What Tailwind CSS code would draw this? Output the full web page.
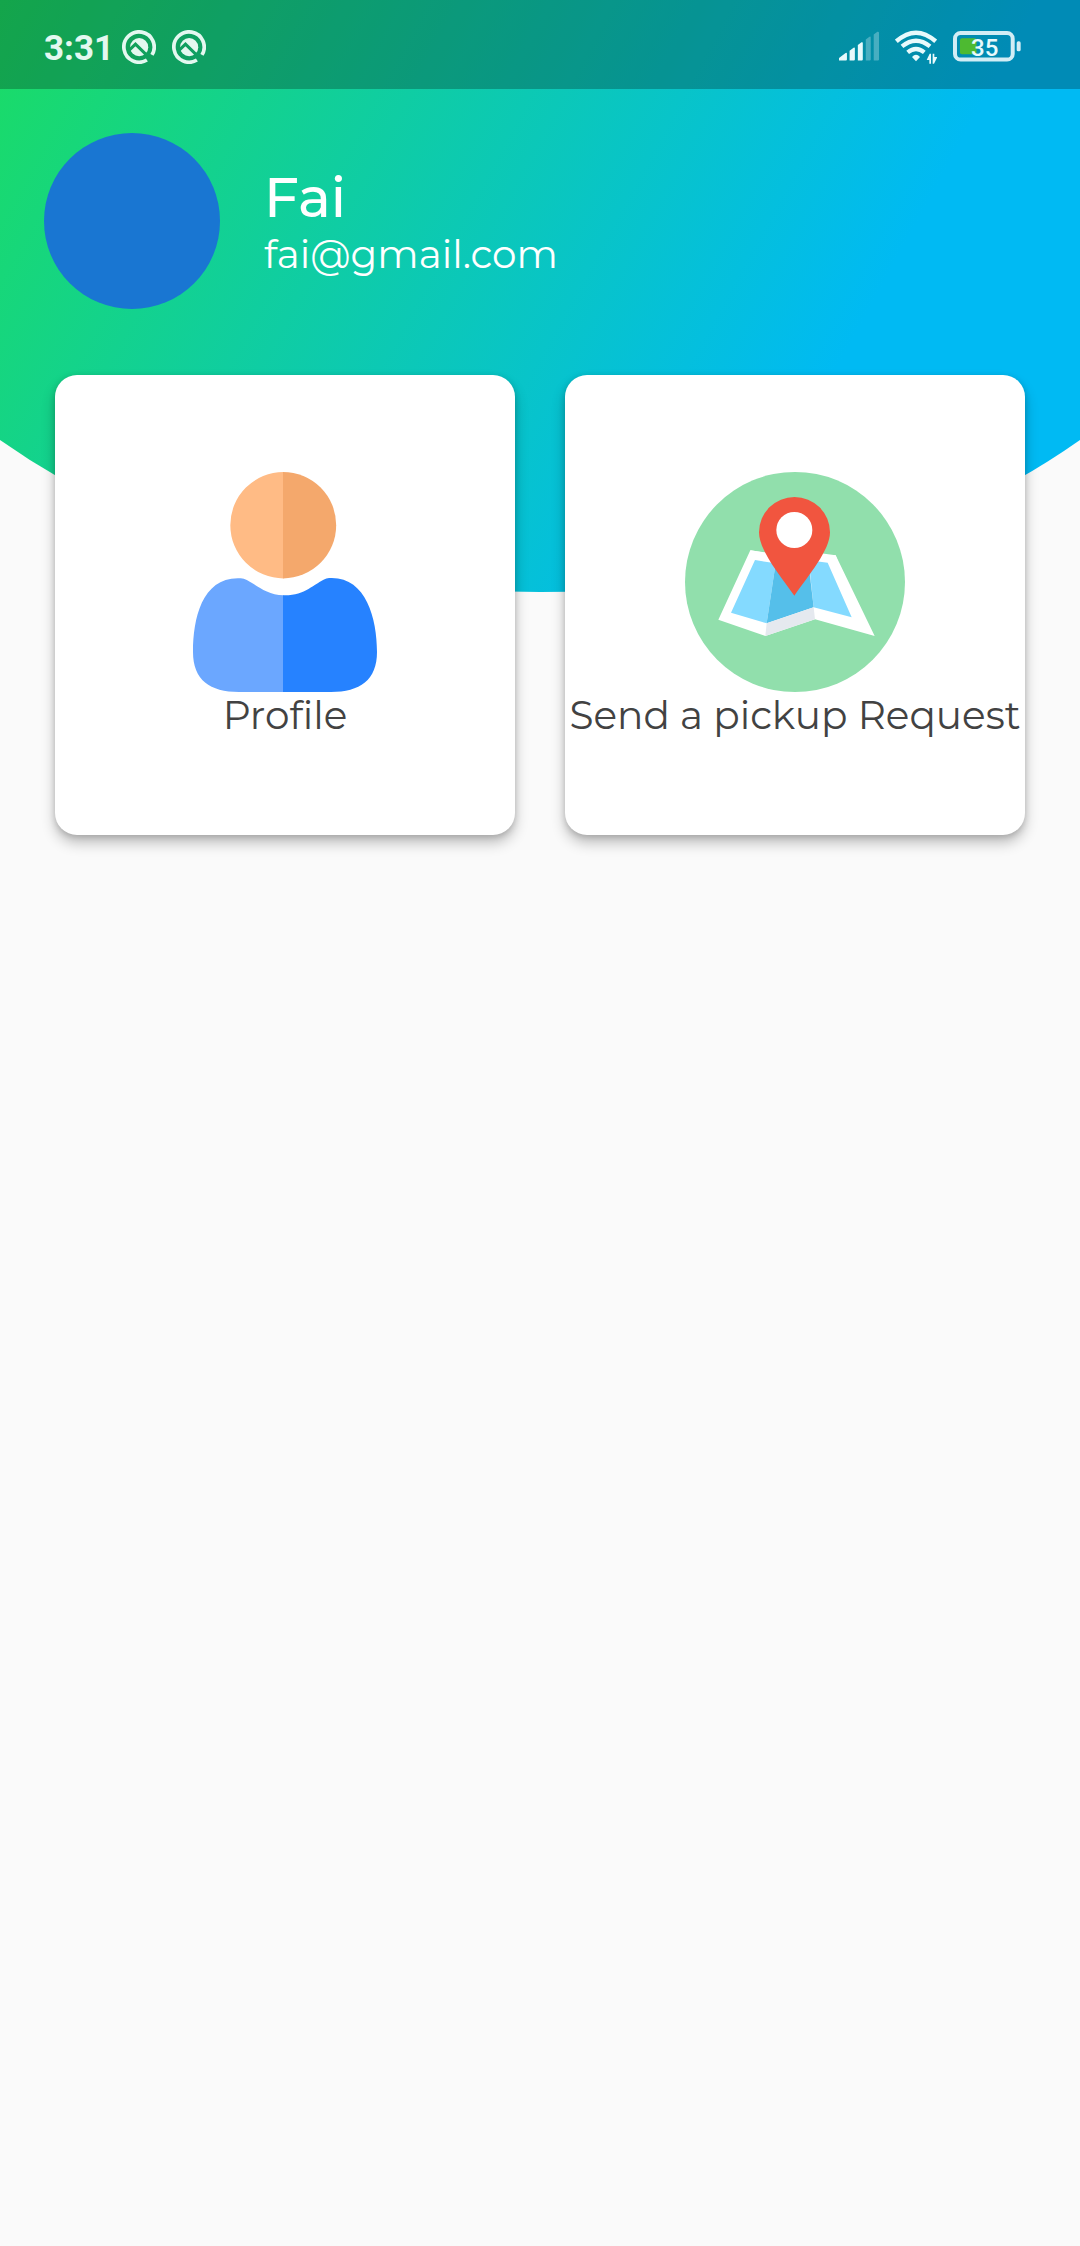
<!DOCTYPE html>
<html lang="en">
<head>
<meta charset="utf-8">
<meta name="viewport" content="width=device-width, initial-scale=1">
<title>Home</title>
<script src="https://cdn.jsdelivr.net/npm/@tailwindcss/browser@4"></script>
</head>
<body class="relative min-h-screen bg-[#fafafa] font-[Montserrat,Inter,sans-serif]">

<!-- Curved header background -->
<svg class="absolute inset-x-0 top-0 h-[592px] w-full" viewBox="0 0 1080 592" preserveAspectRatio="none" aria-hidden="true">
  <defs>
    <linearGradient id="sky" gradientUnits="userSpaceOnUse" x1="0" y1="0" x2="1080" y2="592">
      <stop offset="0" stop-color="#1bdc64"/>
      <stop offset="0.740" stop-color="#00baf3"/>
    </linearGradient>
  </defs>
  <path fill="url(#sky)" d="M0 0H1080V440Q864 592 540 592Q216 592 0 440Z"/>
</svg>

<!-- Status bar -->
<div class="relative flex h-[89px] items-center justify-between bg-black/25 pt-1 pr-[59px] pl-11 text-[#e4f8f0]">
  <div class="flex items-center">
    <span class="mr-2 pt-1 font-[Roboto,sans-serif] text-[35px] leading-10 font-bold">3:31</span>
    <svg class="mr-4 size-[34px]" viewBox="366 90 101 101" aria-hidden="true">
      <defs>
        <mask id="ridge" maskUnits="userSpaceOnUse" x="366" y="90" width="101" height="101">
          <rect x="366" y="90" width="101" height="101" fill="#fff"/>
          <path d="M386 151L406 132L444 169" fill="none" stroke="#000" stroke-width="9"/>
        </mask>
      </defs>
      <path fill="none" stroke="currentColor" stroke-width="11" d="M440 179A45 45 0 1 1 455 164"/>
      <circle cx="417" cy="141" r="27" fill="currentColor" mask="url(#ridge)"/>
    </svg>
    <svg class="size-[34px]" viewBox="366 90 101 101" aria-hidden="true">
      <path fill="none" stroke="currentColor" stroke-width="11" d="M440 179A45 45 0 1 1 455 164"/>
      <circle cx="417" cy="141" r="27" fill="currentColor" mask="url(#ridge)"/>
    </svg>
  </div>
  <div class="flex items-center gap-4">
    <svg class="h-[34px] w-10" viewBox="117 91 121 102" fill="#e8fafc" aria-label="Signal" role="img">
      <path d="M117 183V175L137 160Q141 158 141 162V180Q141 183 138 183ZM149 183V153L161 144Q165 142 165 146V180Q165 183 162 183ZM174 183V136L185 128Q189 126 189 130V180Q189 183 186 183Z"/>
      <path opacity="0.300" d="M198 183V119L209 111Q213 109 213 113V180Q213 183 210 183ZM222 183V104L233 96Q238 95 238 99V180Q238 183 235 183Z"/>
    </svg>
    <svg class="h-[34px] w-[42px]" viewBox="285 94 126 102" aria-label="Wi-Fi" role="img">
      <g fill="none" stroke="#e8fafc" stroke-width="13">
        <path d="M289 128Q348 76 407 128"/>
        <path d="M306 143Q348 109 390 143"/>
        <path d="M323 161Q348 141 373 161"/>
      </g>
      <path fill="#e8fafc" d="M336 175Q348 162 360 175L348 188Z"/>
      <path fill="#e8fafc" d="M389 165H393V195H388V184H380ZM398 165H403V175H412L402 195H398Z"/>
    </svg>
    <div class="relative h-[31px] w-[68px]">
      <svg class="size-full" viewBox="459 95 205 93" aria-hidden="true">
        <rect x="465" y="101" width="174" height="80" rx="17" fill="none" stroke="#d2edf5" stroke-width="12"/>
        <rect x="480" y="117" width="50" height="48" rx="6" fill="#4dba31"/>
        <rect x="651" y="126" width="12" height="30" rx="5" fill="#d2edf5"/>
      </svg>
      <span class="absolute inset-y-0 left-[18px] font-[Roboto,sans-serif] text-[24px] leading-[34px] font-medium text-[#e8fafc]">35</span>
    </div>
  </div>
</div>

<main class="relative [font-feature-settings:'liga'_0]">
  <!-- Account summary -->
  <header class="flex items-center gap-11 px-11 pt-11 pb-[66px] text-white">
    <div class="size-44 shrink-0 rounded-full bg-[#1976d2]"></div>
    <div class="min-w-0">
      <h1 class="text-[55px] leading-[67px] font-medium">Fai</h1>
      <p class="text-[39px] leading-[47px]">fai@gmail.com</p>
    </div>
  </header>

  <!-- Dashboard cards -->
  <nav class="grid grid-cols-2 gap-[50px] px-[55px] text-[39px] leading-[47px] text-[#424242]">
    <a href="#profile" class="flex aspect-square flex-col items-center justify-center rounded-[22px] bg-white whitespace-nowrap shadow-[0_8px_14px_rgb(0_0_0/0.24),0_2px_6px_rgb(0_0_0/0.16)]">
      <svg class="size-[220px]" viewBox="0 0 220 220" aria-hidden="true">
        <path fill="#ffbb85" d="M108.500 0A53.200 53.200 0 0 0 108.500 106.400Z"/>
        <path fill="#f4a86c" d="M108 0A53.200 53.200 0 0 1 108 106.400Z"/>
        <path fill="#6ba7ff" d="M108.500 123.200C90 123 80 111 68.800 106.700C28 102 18 145 18 180C18 208 35 220 64 220H108.500Z"/>
        <path fill="#2682ff" d="M108 123.200C130 124 138 112 151.400 106.400C190 102 202 145 202 180C202 208 185 220 156 220H108Z"/>
      </svg>
      <span>Profile</span>
    </a>
    <a href="#pickup" class="flex aspect-square flex-col items-center justify-center rounded-[22px] bg-white whitespace-nowrap shadow-[0_8px_14px_rgb(0_0_0/0.24),0_2px_6px_rgb(0_0_0/0.16)]">
      <svg class="size-[220px]" viewBox="75 65 660 660" aria-hidden="true">
        <circle cx="405" cy="395" r="330" fill="#91dfac"/>
        <path fill="#fff" d="M271 300L400 320L527 315L644 557L465 507L316 557L175 508Z"/>
        <path fill="#fff" d="M271 300L360 312V360H460V306L527 315L540 350H290Z"/>
        <path fill="#84daff" d="M285 329L347 339L320 519L213 487ZM446 330L503 337L575 501L461 471Z"/>
        <path fill="#55bfea" d="M349 325H444L461 471L320 519Z"/>
        <path fill="#e5e9ef" d="M320 519L461 471L465 507L316 557Z"/>
        <path fill="#f1553f" d="M403 436C360 375 297 300 297 246A106.500 106 0 0 1 510 246C510 300 446 375 403 436Z"/>
        <circle cx="403" cy="239" r="54" fill="#fff"/>
      </svg>
      <span>Send a pickup Request</span>
    </a>
  </nav>
</main>
</body>
</html>
